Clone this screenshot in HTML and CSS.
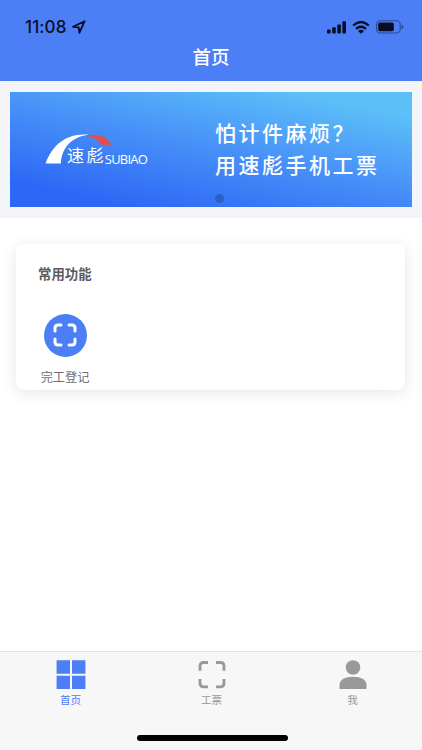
FILE: index.html
```
<!DOCTYPE html>
<html lang="zh-CN">

<head>
  <meta charset="UTF-8">
  <meta name="viewport" content="width=device-width, initial-scale=1.0">
  <title>首页</title>
  <link rel="stylesheet" href="styles.css">
</head>

<body>

  <header class="header">
    <div class="status">
      <span class="status__time">11:08</span>
      <svg class="status__location" width="14" height="14" viewBox="0 0 14 14">
        <path d="M1 6.8L12.6 1.2L7.4 12.8L6.7 7.4Z" fill="none" stroke="#080e24" stroke-width="1.8" stroke-linejoin="round"/>
      </svg>
      <svg class="status__signal" width="19" height="13" viewBox="0 0 19 13">
        <rect x="0" y="8.5" width="3.6" height="4" rx="1"/>
        <rect x="5.2" y="6.2" width="3.6" height="6.3" rx="1"/>
        <rect x="10.3" y="3.4" width="3.6" height="9.1" rx="1"/>
        <rect x="15.4" y="0.3" width="3.6" height="12.2" rx="1"/>
      </svg>
      <svg class="status__wifi" width="18" height="13" viewBox="0 0 18 13">
        <path d="M1.2 4.5Q9-2.4 16.8 4.5M4 7.9Q9 3.6 14 7.9" fill="none" stroke="#080e24" stroke-width="2.3"/>
        <path d="M6 9.9Q9 7.6 12 9.9L9 12.8Z"/>
      </svg>
      <svg class="status__battery" width="28" height="14" viewBox="0 0 28 14">
        <rect x="0.6" y="0.8" width="23.6" height="12.2" rx="3.6" fill="none" stroke="#2b498f" stroke-width="1.1"/>
        <rect x="2.2" y="2.5" width="15.6" height="8.8" rx="1.8"/>
        <path d="M25.5 4.8Q27.3 5.4 27.3 7T25.5 9.2Z" fill="#2b498f"/>
      </svg>
    </div>
    <h1 class="header__title">首页</h1>
  </header>

  <main class="content">
    <section class="swiper">
      <div class="banner">
        <svg class="banner__logo" width="110" height="42" viewBox="0 0 110 42">
          <path d="M0.5 31.5C8 12 22 1 44 2.8C28 4.5 17 14 15.8 31.5Z" fill="#fff"/>
          <path d="M40 3.8C52 1 63 4.5 66.5 12.8H56C53.5 8 48 4.5 40 3.8Z" fill="#e84c4a"/>
          <text class="banner__name" x="22" y="30.3">速</text>
          <text class="banner__name" x="41.5" y="30.3">彪</text>
          <text class="banner__latin" x="59.8" y="31.8">SUBIAO</text>
        </svg>
        <p class="banner__text">怕计件麻烦？<br>用速彪手机工票</p>
        <span class="banner__dot"></span>
      </div>
    </section>

    <section class="card">
      <h2 class="card__title">常用功能</h2>
      <div class="card__item">
        <div class="card__icon">
          <svg width="24" height="24" viewBox="0 0 24 24">
            <path d="M2 8V5Q2 2 5 2H8M16 2H19Q22 2 22 5V8M22 16V19Q22 22 19 22H16M8 22H5Q2 22 2 19V16" fill="none" stroke="#fff" stroke-width="3" stroke-linecap="round"/>
          </svg>
        </div>
        <span class="card__label">完工登记</span>
      </div>
    </section>
  </main>

  <nav class="tabbar">
    <div class="tabbar__item tabbar__item_active">
      <svg width="30" height="30" viewBox="0 0 30 30" fill="#4c7ef6">
        <path d="M0.6 0.3H14V13.7H0.6ZM16 0.3H29.4V13.7H16ZM0.6 15.7H14V29.1H0.6ZM16 15.7H29.4V29.1H16Z"/>
      </svg>
      <span>首页</span>
    </div>
    <div class="tabbar__item">
      <svg width="30" height="30" viewBox="0 0 30 30">
        <path d="M3 10.7V6Q3 2.5 6.5 2.5H11M19 2.5H23.5Q27 2.5 27 6V10.7M27 19V23.3Q27 26.8 23.5 26.8H19M11 26.8H6.5Q3 26.8 3 23.3V19" fill="none" stroke="#999" stroke-width="2.8"/>
      </svg>
      <span>工票</span>
    </div>
    <div class="tabbar__item">
      <svg width="30" height="30" viewBox="0 0 30 30" fill="#999">
        <circle cx="15" cy="7.5" r="7.3"/>
        <path d="M1.5 29.1V25C1.5 19.5 7 16.7 15 16.7S28.5 19.5 28.5 25V29.1Z"/>
      </svg>
      <span>我</span>
    </div>
    <span class="tabbar__home"></span>
  </nav>

</body>

</html>
```
FILE: styles.css
```
* {
  box-sizing: border-box;
}

body {
  display: flex;
  flex-direction: column;
  height: 750px;
  margin: 0;
  overflow: hidden;
  background-color: #fff;
  font-family: "Noto Sans CJK SC", sans-serif;
}

.header {
  height: 81px;
  background-color: #4c7ef6;
}

.status {
  display: flex;
  align-items: center;
  height: 41px;
  padding: 13px 18px 0 25px;
  fill: #080e24;
}

.status__time {
  width: 43px;
  color: #080e24;
  font: 500 17px/20px Inter, sans-serif;
  letter-spacing: 0.1px;
}

.status__location {
  margin-left: 4px;
}

.status__signal {
  margin-left: auto;
}

.status__wifi {
  margin-left: 6px;
}

.status__battery {
  margin-left: 6px;
}

.header__title {
  margin: 0;
  color: #fff;
  font-size: 18.5px;
  font-weight: 500;
  line-height: 30px;
  text-align: center;
}

.content {
  flex: 1;
}

.swiper {
  height: 137px;
  padding: 11px 10.5px 11px 10px;
  background-color: #f3f5f9;
}

.banner {
  position: relative;
  display: flex;
  align-items: flex-start;
  height: 115px;
  padding: 24px 0 0 35px;
  background: linear-gradient(192deg, #5cc0f8 12%, #478ff8 50%, #2c67f5 88%);
}

.banner__logo {
  margin-top: 16px;
  fill: #fff;
}

.banner__name {
  font-size: 17px;
}

.banner__latin {
  font: 13px "Open Sans", sans-serif;
  letter-spacing: -0.8px;
}

.banner__text {
  margin: 0 0 0 60px;
  color: #fff;
  font-size: 21px;
  font-weight: 500;
  line-height: 32px;
  letter-spacing: 2.5px;
  white-space: nowrap;
}

.banner__dot {
  position: absolute;
  bottom: 4px;
  left: 205px;
  width: 9px;
  height: 9px;
  border-radius: 50%;
  background-color: #295fc9;
}

.card {
  height: 146px;
  margin: 26px 17px 0 16px;
  padding: 19px 22px 0;
  border-radius: 8px;
  background-color: #fff;
  box-shadow: 0 3px 16px rgba(0, 0, 0, 0.1);
}

.card__title {
  margin: 0;
  color: #5c5c5c;
  font-size: 13.4px;
  font-weight: 700;
  line-height: 20px;
}

.card__item {
  display: flex;
  flex-direction: column;
  align-items: center;
  width: 54px;
  margin-top: 31px;
}

.card__icon {
  display: flex;
  align-items: center;
  justify-content: center;
  width: 43px;
  height: 43px;
  padding-bottom: 1px;
  border-radius: 50%;
  background-color: #4c7ef6;
}

.card__label {
  margin-top: 10px;
  color: #707070;
  font-size: 12.2px;
  line-height: 20px;
}

.tabbar {
  position: relative;
  display: flex;
  height: 99px;
  padding-top: 8px;
  border-top: 1px solid #e2e2e2;
  background-color: #f7f7f7;
}

.tabbar__item {
  display: flex;
  flex: 1;
  flex-direction: column;
  align-items: center;
  padding-left: 2px;
  color: #999;
  font-size: 10.6px;
  line-height: 20px;
}

.tabbar__item_active {
  padding-left: 1px;
  color: #4c7ef6;
}

.tabbar__home {
  position: absolute;
  bottom: 9px;
  left: 137px;
  width: 151px;
  height: 6px;
  border-radius: 3px;
  background-color: #000;
}
```
